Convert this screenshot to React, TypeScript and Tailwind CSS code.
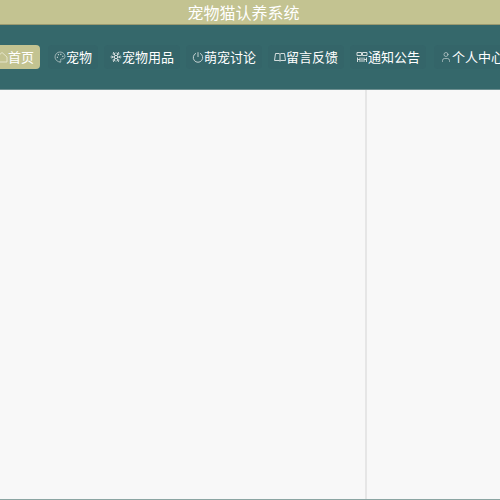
import { Palette, Snowflake, User } from "lucide-react";
import type { ReactNode } from "react";

function HomeIcon() {
  return (
    <svg viewBox="0 0 12 12" fill="none" stroke="currentColor" strokeWidth="0.9" className="h-3 w-3 shrink-0">
      <path d="M1 6 6 1.500 11 6v5H3V6" />
    </svg>
  );
}

function NoticeIcon() {
  return (
    <svg viewBox="0 0 12 12" fill="none" stroke="currentColor" strokeWidth="1" className="h-3 w-3 shrink-0">
      <path d="M1 1.500h4.500v3H1zM6.500 1.500H11v3H6.500z" />
      <path d="M1.500 6.500v4.500M4 6.500v4.500M6 6.500v4.500M8 6.500v4.500M10.500 6.500v4.500M1.500 8.500H4M8 8.500h2.500" />
    </svg>
  );
}

function BookIcon() {
  return (
    <svg viewBox="0 0 12 12" fill="none" stroke="currentColor" strokeWidth="1" className="h-3 w-3 shrink-0">
      <path d="M1.500 2.500h3.500l1 .8 1-.8h3.500l1 7H7l-1 .6-1-.6H.5z" />
      <path d="M6 3.300v6.800" />
    </svg>
  );
}

function PowerIcon() {
  return (
    <svg viewBox="0 0 12 12" fill="none" stroke="currentColor" strokeWidth="0.9" className="h-3 w-3 shrink-0">
      <path d="M4 2.300a4.700 4.700 0 1 0 4 0" />
      <path d="M6 1.200v4.800" />
    </svg>
  );
}

const navItems: { label: string; icon: ReactNode; active?: boolean }[] = [
  { label: "首页", icon: <HomeIcon />, active: true },
  { label: "宠物", icon: <Palette className="h-3 w-3 shrink-0" strokeWidth={1.25} /> },
  { label: "宠物用品", icon: <Snowflake className="h-3 w-3 shrink-0" strokeWidth={2} /> },
  { label: "萌宠讨论", icon: <PowerIcon /> },
  { label: "留言反馈", icon: <BookIcon /> },
  { label: "通知公告", icon: <NoticeIcon /> },
  { label: "个人中心", icon: <User className="h-3 w-3 shrink-0" strokeWidth={1.25} /> },
];

export default function App() {
  return (
    <div className="flex h-screen flex-col overflow-hidden bg-[#f8f8f8] font-['Noto_Sans_CJK_SC','Liberation_Sans',sans-serif]">
      <header className="flex h-[25px] shrink-0 items-center justify-center border-b border-[#9a9a70] bg-[#c3c391] pr-[13px] text-base leading-none text-white">
        宠物猫认养系统
      </header>
      <nav className="flex h-[65px] shrink-0 items-center justify-center gap-[6px] overflow-hidden border-b border-[#6d8f90] bg-[#35686b]">
        {navItems.map((item, i) => (
          <a
            key={item.label}
            className={
              item.active
                ? "mr-[2px] flex h-6 shrink-0 items-center rounded bg-[#c3c391] px-[6px] text-[13px] text-white"
                : i === navItems.length - 1
                  ? "ml-[2px] flex h-6 shrink-0 items-center rounded bg-[#346569] px-[6px] text-[13px] text-white"
                  : "flex h-6 shrink-0 items-center rounded bg-[#346569] px-[6px] text-[13px] text-white"
            }
          >
            <span className={item.active ? "text-[#e8e8d0]" : "text-[#d5dede]"}>{item.icon}</span>
            {item.label}
          </a>
        ))}
      </nav>
      <main className="flex flex-1 border-b border-[#8ba5a3]">
        <div className="flex-1 border-r-2 border-[#e6e6e6]" />
        <div className="w-[133px] shrink-0" />
      </main>
    </div>
  );
}
